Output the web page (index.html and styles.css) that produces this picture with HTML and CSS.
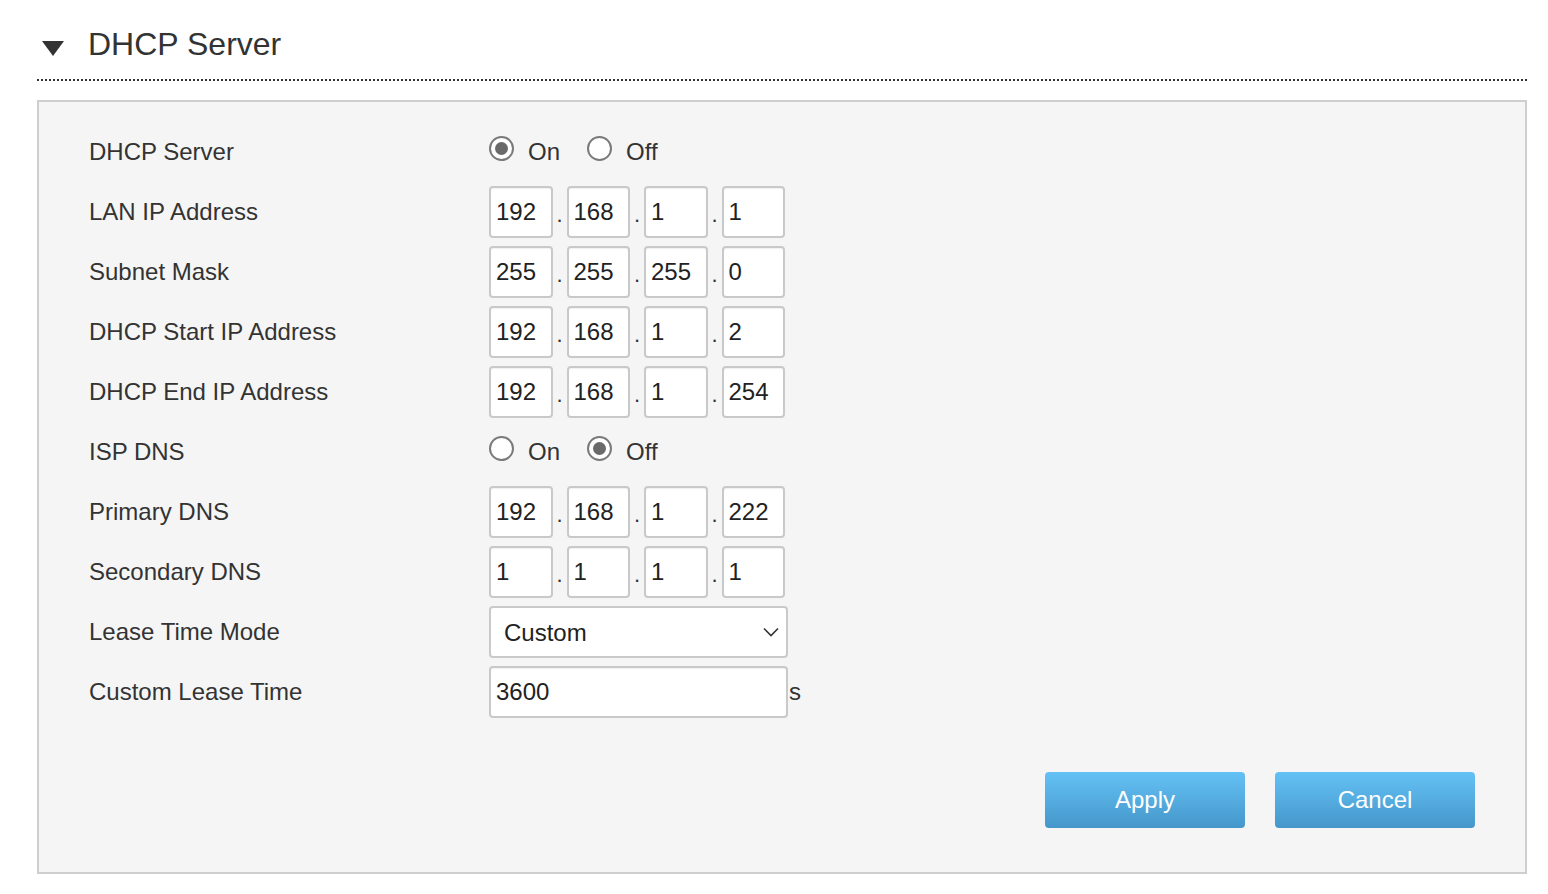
FILE: index.html
```html
<!DOCTYPE html>
<html>
<head>
<meta charset="utf-8">
<link rel="stylesheet" href="styles.css">
</head>
<body>
<div class="section">
  <div class="header">
    <svg class="caret" width="22" height="16" viewBox="0 0 22 16"><polygon points="0,1 22,1 11,16" fill="#333"/></svg>
    <h1 class="title">DHCP Server</h1>
  </div>
  <div class="panel">
    <div class="row">
      <div class="label">DHCP Server</div>
      <div class="radios">
        <label class="radio-item"><input type="radio" name="dhcp" checked><span>On</span></label>
        <label class="radio-item"><input type="radio" name="dhcp"><span>Off</span></label>
      </div>
    </div>
    <div class="row">
      <div class="label">LAN IP Address</div>
      <div class="ip"><input value="192"><span class="dot">.</span><input value="168"><span class="dot">.</span><input value="1"><span class="dot">.</span><input value="1"></div>
    </div>
    <div class="row">
      <div class="label">Subnet Mask</div>
      <div class="ip"><input value="255"><span class="dot">.</span><input value="255"><span class="dot">.</span><input value="255"><span class="dot">.</span><input value="0"></div>
    </div>
    <div class="row">
      <div class="label">DHCP Start IP Address</div>
      <div class="ip"><input value="192"><span class="dot">.</span><input value="168"><span class="dot">.</span><input value="1"><span class="dot">.</span><input value="2"></div>
    </div>
    <div class="row">
      <div class="label">DHCP End IP Address</div>
      <div class="ip"><input value="192"><span class="dot">.</span><input value="168"><span class="dot">.</span><input value="1"><span class="dot">.</span><input value="254"></div>
    </div>
    <div class="row">
      <div class="label">ISP DNS</div>
      <div class="radios">
        <label class="radio-item"><input type="radio" name="isp"><span>On</span></label>
        <label class="radio-item"><input type="radio" name="isp" checked><span>Off</span></label>
      </div>
    </div>
    <div class="row">
      <div class="label">Primary DNS</div>
      <div class="ip"><input value="192"><span class="dot">.</span><input value="168"><span class="dot">.</span><input value="1"><span class="dot">.</span><input value="222"></div>
    </div>
    <div class="row">
      <div class="label">Secondary DNS</div>
      <div class="ip"><input value="1"><span class="dot">.</span><input value="1"><span class="dot">.</span><input value="1"><span class="dot">.</span><input value="1"></div>
    </div>
    <div class="row">
      <div class="label">Lease Time Mode</div>
      <div class="select-wrap">
        <select class="select"><option>Custom</option></select>
        <svg class="chev" width="16" height="10" viewBox="0 0 16 10"><polyline points="1,1.5 8,8.5 15,1.5" fill="none" stroke="#333" stroke-width="1.6"/></svg>
      </div>
    </div>
    <div class="row">
      <div class="label">Custom Lease Time</div>
      <input class="wide" value="3600"><span class="unit">s</span>
    </div>
    <div class="actions">
      <button class="btn">Apply</button>
      <button class="btn">Cancel</button>
    </div>
  </div>
</div>
</body>
</html>
```
FILE: styles.css
```css
* { box-sizing: border-box; }
body {
  margin: 0;
  background: #fff;
  font-family: "Liberation Sans", Arial, Helvetica, sans-serif;
  color: #333;
}
.section {
  margin: 0 21px 0 37px;
}
.header {
  display: flex;
  align-items: center;
  padding: 24px 0 15px 5px;
  border-bottom: 2px dotted #333;
  margin-bottom: 19px;
}
.caret {
  margin-top: 8px;
  margin-right: 24px;
}
.title {
  margin: 0;
  font-size: 32px;
  font-weight: normal;
  line-height: 40px;
  color: #333;
}
.panel {
  border: 2px solid #cecece;
  background: #f5f5f5;
  padding: 20px 50px 44px 50px;
}
.row {
  display: flex;
  align-items: center;
  height: 60px;
}
.label {
  width: 400px;
  font-size: 24px;
  color: #333;
}
.radios {
  display: flex;
  align-items: center;
}
.radio-item {
  display: flex;
  align-items: center;
  margin-right: 27px;
  font-size: 24px;
  color: #333;
}
.radio-item input {
  appearance: none;
  -webkit-appearance: none;
  width: 25px;
  height: 25px;
  margin: 0 14px 0 0;
  border: 2px solid #7a7a7a;
  border-radius: 50%;
  background: #fff;
  position: relative;
  top: -4px;
}
.radio-item input:checked::after {
  content: "";
  position: absolute;
  left: 4px;
  top: 4px;
  width: 13px;
  height: 13px;
  border-radius: 50%;
  background: #6a6a6a;
}
.ip {
  display: flex;
  align-items: center;
}
.ip input, .wide {
  width: 63.5px;
  height: 52px;
  border: 2px solid #c9c9c9;
  border-radius: 4px;
  background: #fff;
  padding: 0 0 0 5px;
  font-family: "Liberation Sans", Arial, sans-serif;
  font-size: 24px;
  color: #222;
  outline: none;
  box-shadow: inset 0 1px 1px rgba(0,0,0,0.06);
}
.dot {
  width: 14px;
  text-align: center;
  font-size: 22px;
  color: #333;
  padding-top: 5px;
}
.wide {
  width: 299px;
}
.unit {
  font-size: 24px;
  margin-left: 1px;
  color: #333;
}
.select-wrap {
  position: relative;
  width: 299px;
  height: 52px;
}
.select {
  appearance: none;
  -webkit-appearance: none;
  width: 100%;
  height: 100%;
  border: 2px solid #c9c9c9;
  border-radius: 4px;
  background: #fff;
  padding: 0 0 0 13px;
  font-family: "Liberation Sans", Arial, sans-serif;
  font-size: 24px;
  color: #222;
  outline: none;
}
.chev {
  position: absolute;
  right: 9px;
  top: 21px;
  pointer-events: none;
}
.actions {
  display: flex;
  justify-content: flex-end;
  gap: 30px;
  margin-top: 50px;
}
.btn {
  width: 200px;
  height: 56px;
  border: none;
  border-radius: 4px;
  background: linear-gradient(#64c1f5, #4597ca);
  color: #fff;
  font-family: "Liberation Sans", Arial, sans-serif;
  font-size: 24px;
}
```
